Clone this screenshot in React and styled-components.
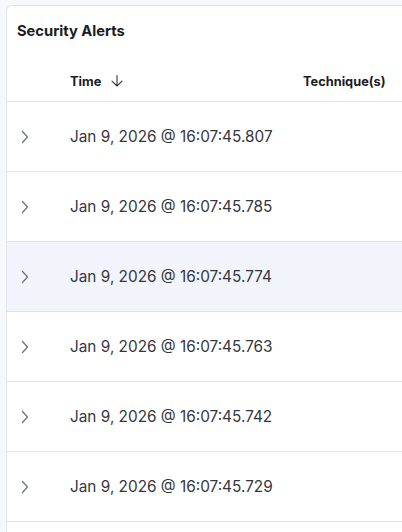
import React from "react";
import styled, { createGlobalStyle } from "styled-components";

const Global = createGlobalStyle`
  html, body { margin: 0; padding: 0; }
  body {
    background: #f7f8fc;
    font-family: Inter, "Noto Sans", sans-serif;
    overflow: hidden;
    width: 402px;
    height: 532px;
  }
`;

const Card = styled.section`
  margin: 5px 0 0 6px;
  width: 396px;
  height: 527px;
  overflow: hidden;
  background: #ffffff;
  border: 1px solid #e0e5ee;
  border-right: none;
  border-bottom: none;
  border-top-left-radius: 6px;
  box-sizing: border-box;
`;

const Title = styled.h2`
  margin: 0;
  padding: 15px 0 0 10px;
  font-size: 14.7px;
  line-height: 20px;
  font-weight: 700;
  color: #1a1c21;
`;

const Row = styled.div`
  display: grid;
  grid-template-columns: 63px 233px 1fr;
  align-items: center;
  box-sizing: border-box;
  height: ${(p) => p.$h}px;
  border-bottom: 1px solid #dde3ee;
  background: ${(p) => (p.$active ? "#f1f4fa" : "transparent")};
`;

const HeaderRow = styled(Row)`
  margin-top: 20px;
`;

const HeadCell = styled.div`
  display: flex;
  align-items: center;
  gap: 9px;
  font-size: 12.8px;
  font-weight: 700;
  color: #1a1c21;
  white-space: nowrap;
`;

const ExpandCell = styled.div`
  display: flex;
  align-items: center;
  padding-left: 14px;
`;

const TimeCell = styled.div`
  font-size: 15.35px;
  color: #343741;
  white-space: nowrap;
`;

const Chevron = () => (
  <svg width="8" height="14" viewBox="0 0 8 14" fill="none">
    <path d="M1.5 1.5 L6.5 7 L1.5 12.5" stroke="#69707d" strokeWidth="1.2" strokeLinecap="round" strokeLinejoin="round" />
  </svg>
);

const ArrowDown = () => (
  <svg width="14" height="14" viewBox="0 0 14 14" fill="none">
    <path d="M7 1.5 V12 M2 7.2 L7 12 L12 7.2" stroke="#343741" strokeWidth="1.1" strokeLinecap="round" strokeLinejoin="round" />
  </svg>
);

const times = [
  "Jan 9, 2026 @ 16:07:45.807",
  "Jan 9, 2026 @ 16:07:45.785",
  "Jan 9, 2026 @ 16:07:45.774",
  "Jan 9, 2026 @ 16:07:45.763",
  "Jan 9, 2026 @ 16:07:45.742",
  "Jan 9, 2026 @ 16:07:45.729",
];

export default function App() {
  return (
    <>
      <Global />
      <Card>
        <Title>Security Alerts</Title>
        <HeaderRow $h={41}>
          <div />
          <HeadCell>
            Time <ArrowDown />
          </HeadCell>
          <HeadCell>Technique(s)</HeadCell>
        </HeaderRow>
        {times.map((t, i) => (
          <Row key={t} $h={70} $active={i === 2}>
            <ExpandCell>
              <Chevron />
            </ExpandCell>
            <TimeCell>{t}</TimeCell>
            <div />
          </Row>
        ))}
      </Card>
    </>
  );
}
